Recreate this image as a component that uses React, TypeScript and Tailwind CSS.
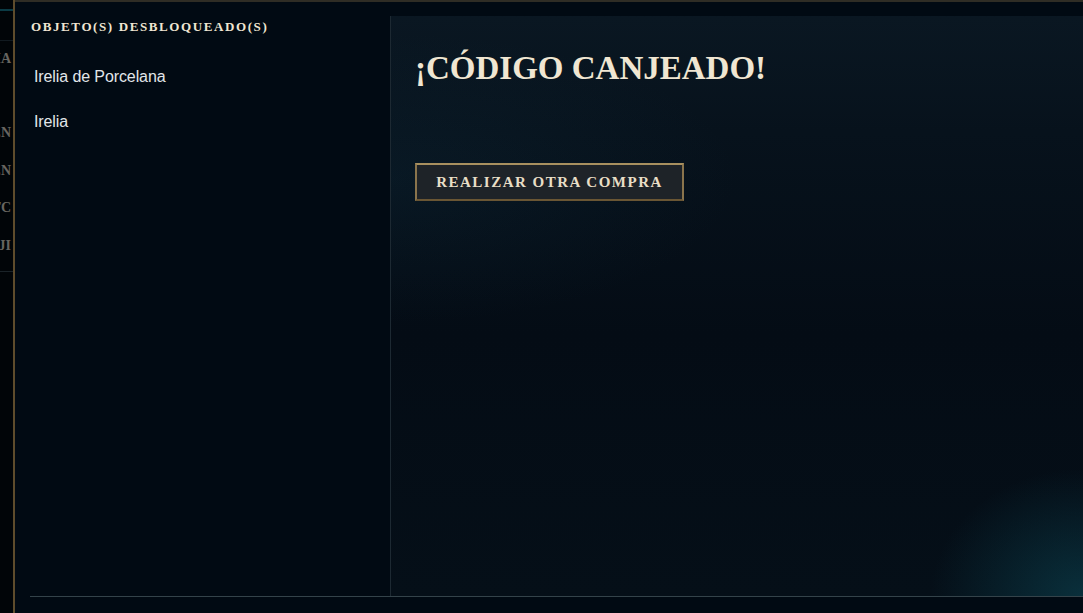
import React from "react";

const serif = { fontFamily: '"Liberation Serif", "DejaVu Serif", serif' };

function StripWord({ text, top }: { text: string; top: number }) {
  return (
    <div className="flex justify-end whitespace-nowrap" style={{ marginTop: top }}>
      <span className="text-[14px] leading-[14px] font-bold text-[#676560] pr-[2px]" style={serif}>
        {text}
      </span>
    </div>
  );
}

export default function App() {
  return (
    <div className="w-[1083px] h-[613px] bg-[#010a13] flex overflow-hidden">
      {/* Left clipped strip of the window behind */}
      <div className="w-[13px] shrink-0 h-full bg-[#010508] flex flex-col overflow-hidden">
        <div className="h-[9px]" />
        <div className="h-[2px] bg-[#0b3b45]" />
        <div className="h-[29px]" />
        <div className="h-[1px] bg-[#111a20]" />
        <StripWord text="DIA" top={11} />
        <StripWord text="EN" top={60} />
        <StripWord text="EN" top={24} />
        <StripWord text="TC" top={23} />
        <StripWord text="UJI" top={24} />
        <div className="h-[1px] bg-[#1a2328] mt-[18px]" />
      </div>
      {/* Gold frame edge */}
      <div className="w-[2px] shrink-0 h-full bg-[#5e4c2c]" />

      <div className="flex-1 flex flex-col border-t-2 border-[#2f2d25]">
        <div className="flex h-[594px]">
          {/* Left list */}
          <div className="w-[375px] shrink-0 pl-[16px] pt-[18px]">
            <div
              className="text-[13px] leading-[14px] font-bold tracking-[1.6px] text-[#f0e6d2]"
              style={serif}
            >
              OBJETO(S) DESBLOQUEADO(S)
            </div>
            <div
              className="pl-[3px] mt-[33px] flex flex-col gap-[26px] text-[16px] leading-[19px] tracking-[-0.1px] text-[#e2e6ea]"
              style={{ fontFamily: '"Liberation Sans", Arial, sans-serif' }}
            >
              <div>Irelia de Porcelana</div>
              <div>Irelia</div>
            </div>
          </div>
          {/* Right result panel */}
          <div className="flex-1 mt-[14px] border-l border-[#1d2932] bg-[radial-gradient(ellipse_22%_22%_at_100%_100%,rgba(14,80,95,0.5),transparent),radial-gradient(ellipse_50%_25%_at_0%_28%,rgba(20,60,80,0.18),transparent),linear-gradient(180deg,#0a1722_0%,#07121c_20%,#040c15_55%,#050f18_100%)] pl-[24px] pt-[33px]">
            <div
              className="text-[33px] leading-[38px] font-bold text-[#f0e6d2]"
              style={serif}
            >
              ¡CÓDIGO CANJEADO!
            </div>
            <button
              className="mt-[76px] w-[269px] h-[38px] bg-[#1e2328] border-2 border-[#8a744c] border-t-[#a8905f] border-b-[#6a5634] flex items-center justify-center"
            >
              <span
                className="text-[15px] leading-[16px] font-bold tracking-[1.5px] text-[#e8dec6]"
                style={serif}
              >
                REALIZAR OTRA COMPRA
              </span>
            </button>
          </div>
        </div>
        {/* Bottom rule */}
        <div className="h-[1px] ml-[15px] bg-[#34434a]" />
      </div>
    </div>
  );
}
